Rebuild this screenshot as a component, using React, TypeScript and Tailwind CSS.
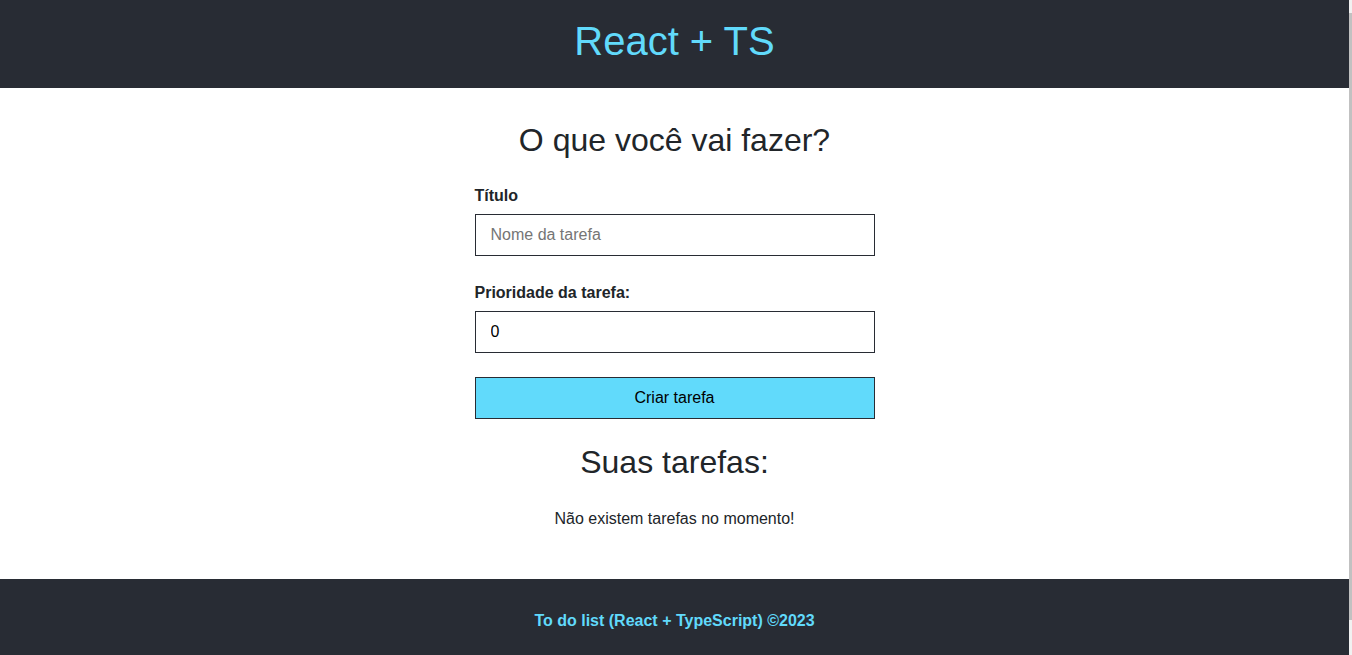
import { useState } from "react";

type Task = { id: number; title: string; difficulty: number };

function Header() {
  return (
    <header className="flex h-[88px] items-center justify-center bg-[#282c34] pb-[6px]">
      <h1 className="text-[40px] leading-[46px] text-[#61dafb]">React + TS</h1>
    </header>
  );
}

function Footer() {
  return (
    <footer className="flex flex-1 justify-center bg-[#282c34] pt-[33px]">
      <p className="text-base font-bold leading-[18px] text-[#61dafb]">
        To do list (React + TypeScript) ©2023
      </p>
    </footer>
  );
}

function TaskForm() {
  const [title, setTitle] = useState("");
  const [difficulty, setDifficulty] = useState("0");

  return (
    <form
      className="flex w-[400px] flex-col"
      onSubmit={(e) => e.preventDefault()}
    >
      <label className="mt-[28px] text-base font-bold leading-[18px]">Título</label>
      <input
        type="text"
        value={title}
        onChange={(e) => setTitle(e.target.value)}
        placeholder="Nome da tarefa"
        className="mt-[9px] h-[42px] border border-[#282c34] px-[15px] text-base text-[#1f1f1f] placeholder:text-[#757575] outline-none"
      />
      <label className="mt-[28px] text-base font-bold leading-[18px]">
        Prioridade da tarefa:
      </label>
      <input
        type="text"
        value={difficulty}
        onChange={(e) => setDifficulty(e.target.value)}
        className="mt-[9px] h-[42px] border border-[#282c34] px-[15px] text-base text-black outline-none"
      />
      <button
        type="submit"
        className="mt-[24px] h-[42px] border border-[#282c34] bg-[#61dafb] text-base text-black"
      >
        Criar tarefa
      </button>
    </form>
  );
}

function TaskList({ tasks }: { tasks: Task[] }) {
  if (tasks.length === 0) {
    return <p className="mt-[29px] text-base leading-[18px]">Não existem tarefas no momento!</p>;
  }
  return null;
}

export default function App() {
  const [tasks] = useState<Task[]>([]);

  return (
    <div className="flex h-[655px] overflow-hidden bg-white font-['Liberation_Sans',Arial,sans-serif] text-[#212529]">
      <div className="flex flex-1 flex-col">
        <Header />
        <main className="flex flex-col items-center pt-[34px] pb-[51px]">
          <h2 className="text-[32px] leading-[37px]">O que você vai fazer?</h2>
          <TaskForm />
          <h2 className="mt-[25px] text-[32px] leading-[37px]">Suas tarefas:</h2>
          <TaskList tasks={tasks} />
        </main>
        <Footer />
      </div>
      {/* fake scrollbar */}
      <div className="flex w-[3px] flex-col bg-[#f1f1f1] pt-[13px] pb-[35px]">
        <div className="flex-1 bg-[#c1c1c1]" />
      </div>
    </div>
  );
}
